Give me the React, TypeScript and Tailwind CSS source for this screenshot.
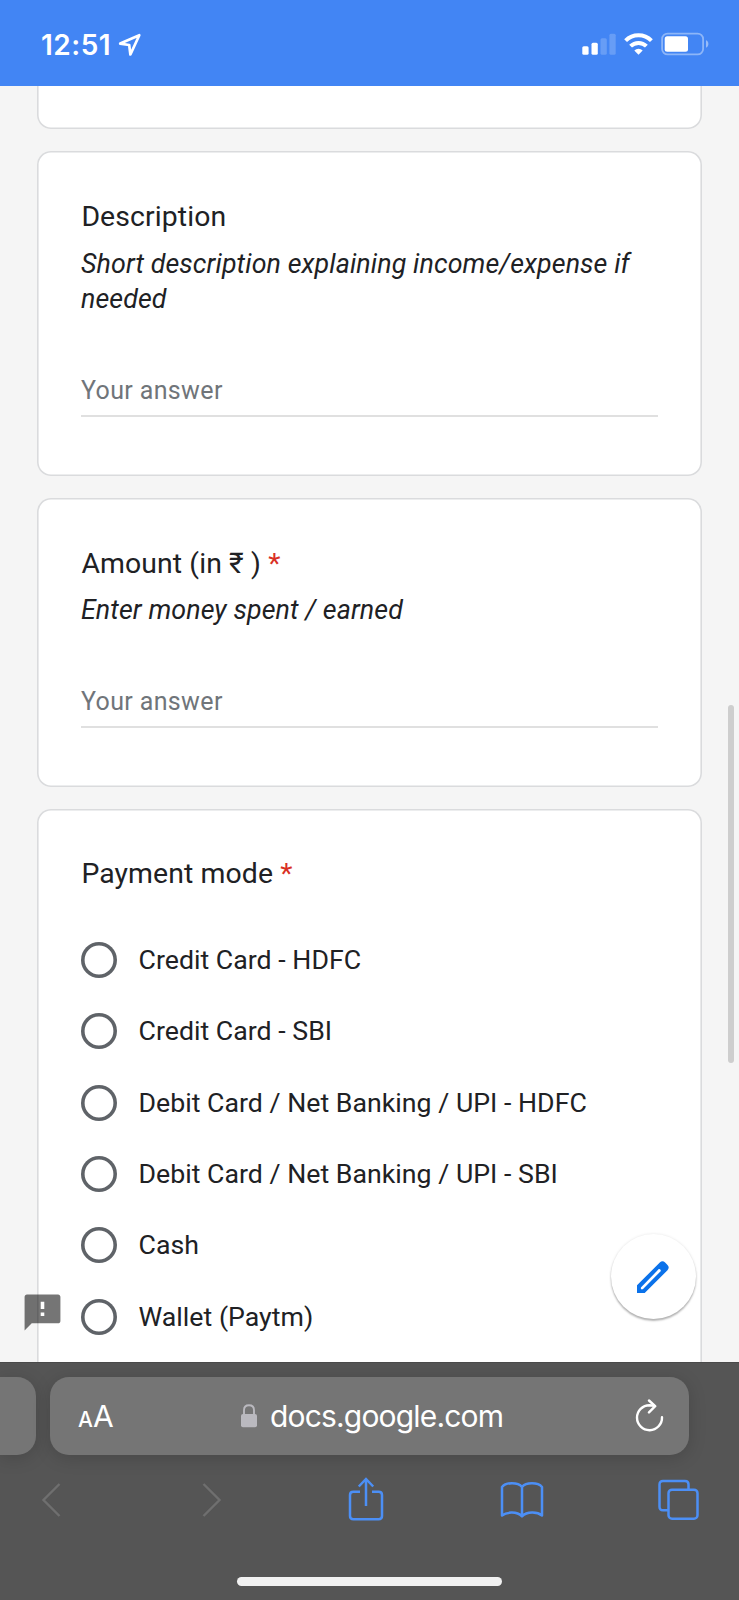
import type { ReactNode } from 'react';

const options = [
  'Credit Card - HDFC',
  'Credit Card - SBI',
  'Debit Card / Net Banking / UPI - HDFC',
  'Debit Card / Net Banking / UPI - SBI',
  'Cash',
  'Wallet (Paytm)',
];

function StatusBar() {
  return (
    <header className="flex h-[86px] shrink-0 items-center justify-between bg-[#4285f4] pr-[29px] pl-[41px] font-['Inter',sans-serif] text-white">
      <div className="flex items-center gap-[8px] pt-[3px]">
        <span className="w-[69px] text-[28px] leading-[34px] font-semibold tracking-[0.5px] whitespace-nowrap">12:51</span>
        <svg width="24" height="24" viewBox="0 0 24 24" fill="none" stroke="currentColor" strokeWidth="2.7" strokeLinejoin="round">
          <path d="M21.3 2.2 2.2 10.6l9 1.400 1.200 9.500z" />
        </svg>
      </div>
      <div className="flex items-center gap-[8px] pt-[2px]">
        <svg width="34" height="22" viewBox="0 0 34 22" fill="currentColor">
          <rect x="0.3" y="13.3" width="6.3" height="8.4" rx="1.5" />
          <rect x="9.5" y="9.8" width="6.3" height="11.9" rx="1.5" />
          <rect x="18.5" y="5.3" width="6.3" height="16.4" rx="1.5" opacity="0.2" />
          <rect x="27.4" y="0.8" width="6.3" height="20.9" rx="1.5" opacity="0.2" />
        </svg>
        <svg width="29" height="22" viewBox="0 0 29 22" fill="none" stroke="currentColor" strokeWidth="4">
          <path d="M1.6 7.7a18.2 18.2 0 0 1 25.8 0" />
          <path d="M6.6 13.2a11.2 11.2 0 0 1 15.8 0" />
          <path d="M10.3 17.4a6 6 0 0 1 8.4 0L14.5 21.8z" fill="currentColor" stroke="none" />
        </svg>
        <svg width="49" height="24" viewBox="0 0 49 24" fill="none">
          <rect x="1.1" y="1.6" width="41" height="20.8" rx="5.5" stroke="currentColor" strokeOpacity="0.4" strokeWidth="1.8" />
          <rect x="3.7" y="4.3" width="23.3" height="15.4" rx="2.5" fill="currentColor" />
          <path d="M45 8.3c3.2 1.2 3.2 6.2 0 7.4z" fill="currentColor" fillOpacity="0.45" />
        </svg>
      </div>
    </header>
  );
}

function Card({ children, className = '' }: { children?: ReactNode; className?: string }) {
  return (
    <section className={`ml-[37px] w-[665px] shrink-0 rounded-[14px] bg-white px-[44px] shadow-[inset_0_0_0_1.6px_#dadbdd] ${className}`}>
      {children}
    </section>
  );
}

function Title({ children, required }: { children: ReactNode; required?: boolean }) {
  return (
    <h2 className="pl-[0.4px] text-[28.4px] leading-[43px] tracking-[0.1px] whitespace-pre text-[#202124]">
      {children}
      {required && <span className="text-[#d93025]"> *</span>}
    </h2>
  );
}

function Question({ title, hint, required }: { title: string; hint: string; required?: boolean }) {
  return (
    <Card className="pt-[44px] pb-[58.4px]">
      <Title required={required}>{title}</Title>
      <p className="mt-[8.6px] text-[26.8px] leading-[35.7px] tracking-[0.1px] text-[#202124] italic">{hint}</p>
      <div className="mt-[51.4px] h-[48px] border-b-2 border-[#e0e0e0] text-[25px] leading-[43px] tracking-[0.36px] text-[#70757a]">
        Your answer
      </div>
    </Card>
  );
}

function Form() {
  return (
    <main className="relative flex h-[1276px] shrink-0 flex-col overflow-hidden bg-[#f5f5f5] font-['Roboto',sans-serif]">
      <Card className="-mt-[20px] h-[63px]" />
      <div className="h-[22px] shrink-0" />
      <Question title="Description" hint="Short description explaining income/expense if needed" />
      <div className="h-[22px] shrink-0" />
      <Question title="Amount (in ₹ )" hint="Enter money spent / earned" required />
      <div className="h-[22px] shrink-0" />
      <Card className="h-[640px] pt-[43.2px]">
        <Title required>Payment mode</Title>
        <ul className="mt-[29px]">
          {options.map((label) => (
            <li key={label} className="flex h-[71.4px] items-center gap-[21.5px]">
              <span className="size-[36px] rounded-full shadow-[inset_0_0_0_3.6px_#5f6368]" />
              <span className="text-[26.7px] tracking-[0.02px] whitespace-nowrap text-[#202124]">{label}</span>
            </li>
          ))}
        </ul>
      </Card>

      <div className="absolute top-[619px] right-[5px] h-[358px] w-[6px] rounded-full bg-[#cecece]" />
      <svg className="absolute top-[1205px] left-[21px]" width="43" height="43" viewBox="0 0 24 24" fill="#000" fillOpacity="0.54">
        <path d="M20.7 2H3.3C2.6 2 2 2.6 2 3.3V22l4-4h14.7c.7 0 1.3-.6 1.3-1.3V3.3c0-.7-.6-1.3-1.3-1.3zM13 14h-2v-2h2zm0-4h-2V6h2z" />
      </svg>
      <button className="absolute top-[1148px] left-[611px] flex size-[85px] items-center justify-center rounded-full bg-white pr-[1px] shadow-[0_2px_2px_rgba(0,0,0,0.28),0_0_3px_rgba(0,0,0,0.1)]">
        <svg width="34" height="34" viewBox="0 0 34 34" fill="#0b72ea" fillRule="evenodd">
          <path d="M1 25.300 23.800 2.500c1.700-1.700 3.700-1.700 5.300 0l2.400 2.400c1.600 1.600 1.600 3.600 0 5.300L8.700 33H1zM4.900 27.400v1.800h1.900L24.400 11.600c.8-.8.300-1.600-.1-2-.5-.5-1.200-.8-2 0z" />
        </svg>
      </button>
    </main>
  );
}

function BrowserBar() {
  return (
    <footer className="flex h-[238px] shrink-0 flex-col overflow-hidden border-t border-[#4a4a4a] bg-[#555] font-['Inter',sans-serif]">
      <div className="mt-[14px] flex h-[78px] shrink-0">
        <div className="w-[36px] rounded-r-[19px] bg-[#757575] shadow-[0_3px_18px_rgba(0,0,0,0.16)]" />
        <div className="ml-[14px] flex w-[639px] items-center rounded-[19px] bg-[#757575] pr-[25px] pl-[28px] text-white shadow-[0_3px_18px_rgba(0,0,0,0.16)]">
          <div className="flex w-[163px] items-baseline pt-[3px]">
            <span className="text-[21px] leading-[40px] font-medium">A</span>
            <span className="text-[30px] leading-[40px]">A</span>
          </div>
          <svg width="16" height="24" viewBox="0 0 16 24" fill="none">
            <rect x="0" y="10" width="16" height="13.3" rx="2" fill="#bab9bf" />
            <path d="M3 11V6.2C3 3 5 1.2 8 1.2s5 1.8 5 5V11" stroke="#bab9bf" strokeWidth="1.9" />
          </svg>
          <span className="ml-[13px] flex-1 text-[30px] leading-[40px] tracking-[-0.82px] whitespace-nowrap">docs.google.com</span>
          <svg className="mt-[1px]" width="30" height="36" viewBox="0 0 30 36" fill="none" stroke="currentColor" strokeWidth="2.4" strokeLinecap="round" strokeLinejoin="round">
            <path d="M28 18.300A12.500 12.500 0 1 1 15.500 6.200l4.500.5" />
            <path d="m15 1.500 6.200 5.700-6.200 6.200" />
          </svg>
        </div>
      </div>
      <div className="mt-[22px] flex h-[46px] shrink-0 items-center pl-[41px]">
        <svg width="20" height="36" viewBox="0 0 20 36" fill="none" stroke="#6f6f6f" strokeWidth="2.4">
          <path d="M18.5 2 2.5 18l16 16" />
        </svg>
        <svg className="ml-[141px]" width="20" height="36" viewBox="0 0 20 36" fill="none" stroke="#6f6f6f" strokeWidth="2.4">
          <path d="m1.5 2 16 16-16 16" />
        </svg>
        <svg className="ml-[126px]" width="36" height="46" viewBox="0 0 36 46" fill="none" stroke="#4c8ff5" strokeWidth="2.5">
          <path d="M12 14.8H5.4C3 14.8 2 16 2 18v21c0 2 1 3.2 3.4 3.2h25.2c2.4 0 3.4-1.2 3.4-3.2V18c0-2-1-3.2-3.400-3.200H24M18 29V2.200M10.800 9.500 18 2l7.200 7.500" />
        </svg>
        <svg className="ml-[115.5px]" width="44" height="38" viewBox="0 0 44 38" fill="none" stroke="#4c8ff5" strokeWidth="2.5" strokeLinejoin="round">
          <path d="M22 6C18 1 6 1 2 6v28.500c5-4 15-4 20 .8zM22 6c4-5 16-5 20 0v28.500c-5-4-15-4-20 .8z" />
        </svg>
        <svg className="ml-[113.5px]" width="42" height="42" viewBox="0 0 42 42" fill="none" stroke="#4c8ff5" strokeWidth="2.5">
          <path d="M11 31.300H6C3.700 31.300 2.500 30 2.500 27.800V5.500C2.500 3.200 3.700 2 6 2h22c2.300 0 3.500 1.200 3.500 3.500v5" />
          <rect x="11.500" y="10.700" width="29" height="29" rx="3.500" />
        </svg>
      </div>
      <div className="mt-[54px] ml-[237px] h-[9px] w-[265px] shrink-0 rounded-full bg-[#f1f1f1]" />
    </footer>
  );
}

export default function App() {
  return (
    <div className="flex h-[1600px] w-[739px] flex-col overflow-hidden">
      <StatusBar />
      <Form />
      <BrowserBar />
    </div>
  );
}
